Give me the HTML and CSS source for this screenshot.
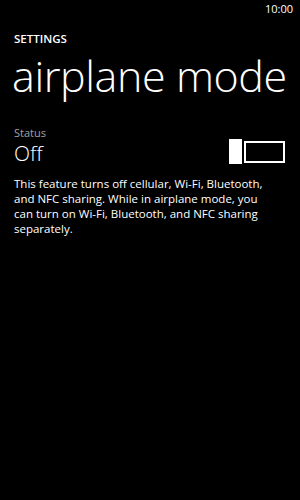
FILE: index.html
```html
<!DOCTYPE html>
<html>
<head>
<meta charset="utf-8">
<link rel="stylesheet" href="styles.css">
</head>
<body>
<div class="phone">
  <div class="statusbar"><span class="time">10:00</span></div>
  <div class="app-title">SETTINGS</div>
  <h1 class="page-title">airplane mode</h1>
  <div class="setting">
    <div class="setting-text">
      <div class="label">Status</div>
      <div class="value">Off</div>
    </div>
    <div class="toggle">
      <div class="thumb"></div>
      <div class="track"></div>
    </div>
  </div>
  <p class="desc">This feature turns off cellular, Wi-Fi, Bluetooth, and NFC sharing. While in airplane mode, you can turn on Wi-Fi, Bluetooth, and NFC sharing separately.</p>
</div>
</body>
</html>
```
FILE: styles.css
```css
html, body {
  margin: 0;
  padding: 0;
  background: #000;
}
.phone {
  width: 300px;
  height: 500px;
  background: #000;
  color: #fff;
  font-family: "Open Sans", "Noto Sans", sans-serif;
  overflow: hidden;
}
.statusbar {
  display: flex;
  justify-content: flex-end;
  height: 18px;
  padding: 0 7px 0 0;
}
.time {
  font-size: 11px;
  line-height: 18px;
  color: #fff;
}
.app-title {
  margin: 13px 0 0 14px;
  font-size: 11.5px;
  font-weight: 600;
  line-height: normal;
}
.page-title {
  margin: 0 0 0 12px;
  font-size: 43px;
  font-weight: 300;
  line-height: normal;
  letter-spacing: -0.4px;
}
.setting {
  display: flex;
  align-items: flex-start;
  justify-content: space-between;
  margin: 21px 15px 0 14px;
}
.label {
  font-size: 11px;
  color: #a0a0a0;
  line-height: 14px;
}
.value {
  font-size: 21px;
  font-weight: 300;
  line-height: 26px;
}
.toggle {
  display: flex;
  align-items: center;
  margin-top: 13px;
  gap: 2px;
}
.thumb {
  width: 13px;
  height: 25px;
  background: #fff;
}
.track {
  width: 37px;
  height: 18px;
  border: 2px solid #fff;
}
.desc {
  margin: 10px 28px 0 14px;
  font-size: 11.5px;
  line-height: 15px;
}
```
